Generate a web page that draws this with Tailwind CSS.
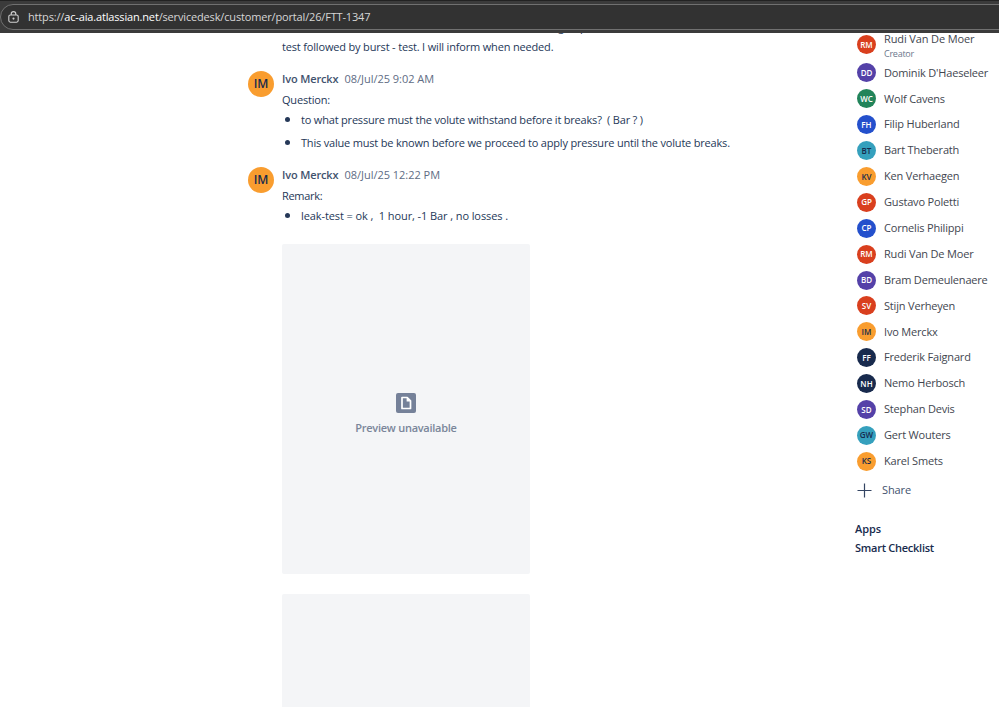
<!DOCTYPE html>
<html lang="en">
<head>
  <meta charset="UTF-8">
  <title>FTT-1347</title>
  <script src="https://cdn.jsdelivr.net/npm/@tailwindcss/browser@4"></script>
</head>
<body class="h-[707px] overflow-hidden bg-white font-['Open_Sans','Noto_Sans',sans-serif] text-[11px] text-[#253858]">

  <!-- Address bar -->
  <header class="h-[33px] border-t border-[#222222] bg-[#3b3b3b] pt-[3px]">
    <div class="-mr-4 flex h-[26px] items-center rounded-l-full border border-[#707070] bg-[#323232] pl-[7px] text-[#d6d6d6]">
      <svg class="h-3 w-[11px]" viewBox="0 0 11 12" fill="none" stroke="#d0d0d0" stroke-width="1.1">
        <rect x="0.8" y="4" width="9.4" height="7.2" rx="1.6"/>
        <path d="M3.2 4V2.9a2.3 2.3 0 0 1 4.6 0V4"/>
        <circle cx="5.5" cy="7.6" r="0.5" fill="#d0d0d0"/>
      </svg>
      <div class="ml-[9px] whitespace-nowrap text-[11px] tracking-[-0.16px]">https://<span class="text-white">ac-aia.atlassian.net</span>/servicedesk/customer/portal/26/FTT-1347</div>
    </div>
  </header>

  <div class="flex h-[674px] overflow-hidden">
    <!-- Comments -->
    <main class="w-[855px] shrink-0 pl-[248px]">
      <div class="h-[4px] overflow-hidden pl-[310px]">
        <div class="-mt-[16px] flex h-5 gap-[16px] leading-5"><span>g</span><span>p</span></div>
      </div>
      <p class="pl-[34px] leading-5 tracking-[-0.17px]">test followed by burst - test. I will inform when needed.</p>

      <article class="mt-[12px] flex gap-2">
        <div class="mt-[2px] flex size-[26px] shrink-0 items-center justify-center rounded-full bg-[#f99d2f] text-[12px] font-semibold text-[#172b4d]">IM</div>
        <div>
          <div class="flex h-[20px] items-center gap-[6px] text-[#42526e]"><span class="font-semibold tracking-[-0.14px]">Ivo Merckx</span><span class="tracking-[-0.02px] text-[#5e6c84]">08/Jul/25 9:02 AM</span></div>
          <p class="mt-[1px] h-5 leading-5 tracking-[-0.2px]">Question:</p>
          <ul class="list-disc pl-[19px] tracking-[-0.19px] marker:text-[13px]">
            <li class="h-[23px] leading-[18px] whitespace-pre">to what pressure must the volute withstand before it breaks?  ( Bar ? )</li>
            <li class="h-[19px] leading-[18px]">This value must be known before we proceed to apply pressure until the volute breaks.</li>
          </ul>
        </div>
      </article>

      <article class="mt-[13px] flex gap-2">
        <div class="mt-[2px] flex size-[26px] shrink-0 items-center justify-center rounded-full bg-[#f99d2f] text-[12px] font-semibold text-[#172b4d]">IM</div>
        <div>
          <div class="flex h-[20px] items-center gap-[6px] text-[#42526e]"><span class="font-semibold tracking-[-0.14px]">Ivo Merckx</span><span class="tracking-[-0.02px] text-[#5e6c84]">08/Jul/25 12:22 PM</span></div>
          <p class="mt-[1px] h-5 leading-5 tracking-[-0.3px]">Remark:</p>
          <ul class="list-disc pl-[19px] tracking-[-0.09px] marker:text-[13px]">
            <li class="h-[19px] leading-[18px] whitespace-pre">leak-test = ok ,  1 hour, -1 Bar , no losses .</li>
          </ul>
          <div class="mt-[19px] flex h-[330px] w-[248px] flex-col items-center rounded-[2px] bg-[#f4f5f7] pt-[149px] text-[#7a869a]">
            <svg class="h-5 w-5" viewBox="0 0 20 20">
              <rect width="20" height="20" rx="2" fill="#758199"/>
              <path d="M6 4.5h5.2l3.3 3.3v7.7H6z" fill="none" stroke="#ffffff" stroke-width="1.7" stroke-linejoin="round"/>
              <path d="M10.6 4v4.4H15z" fill="#ffffff"/>
            </svg>
            <span class="mt-[5px] leading-5 font-semibold tracking-[-0.26px]">Preview unavailable</span>
          </div>
          <div class="mt-5 h-[330px] w-[248px] rounded-[2px] bg-[#f4f5f7]"></div>
        </div>
      </article>
    </main>

    <!-- People on the request -->
    <aside class="whitespace-nowrap">
      <div class="flex h-[27px] gap-[8px] pl-[2px]">
        <div class="mt-[2px] flex size-[19px] items-center justify-center rounded-full bg-[#d93f1e] text-[8px] font-semibold text-white">RM</div>
        <div class="text-[#42464f]">
          <div class="-mt-px h-[14px] leading-[13px] tracking-[-0.12px]">Rudi Van De Moer</div>
          <div class="text-[9px] leading-[15px] tracking-[-0.25px] text-[#6b778c]">Creator</div>
        </div>
      </div>
      <ul id="people" class="text-[#42464f]"></ul>
      <div class="mt-[6px] flex h-[20px] items-center gap-[10px] pl-[2px] font-medium text-[#42526e]">
        <svg class="h-[15px] w-[15px]" viewBox="0 0 15 15" stroke="#344563" stroke-width="1.2"><path d="M7.5 0.5v14M0.5 7.5h14"/></svg>
        <span class="tracking-[-0.1px]">Share</span>
      </div>
      <div class="mt-[19px] h-[19px] leading-[19px] font-semibold tracking-[-0.1px] text-[#172b4d]">Apps</div>
      <div class="h-[19px] leading-[20px] font-semibold tracking-[-0.26px] text-[#172b4d]">Smart Checklist</div>
    </aside>
  </div>

  <script>
    const colors = {
      purple: 'bg-[#5441a8] text-white',
      green: 'bg-[#22845a] text-white',
      blue: 'bg-[#2450cc] text-white',
      teal: 'bg-[#35a0bd] text-[#172b4d]',
      orange: 'bg-[#f99d2f] text-[#172b4d]',
      red: 'bg-[#d93f1e] text-white',
      navy: 'bg-[#182a4d] text-white'
    };
    const people = [
      ['DD', "Dominik D'Haeseleer", 'purple'],
      ['WC', 'Wolf Cavens', 'green'],
      ['FH', 'Filip Huberland', 'blue'],
      ['BT', 'Bart Theberath', 'teal'],
      ['KV', 'Ken Verhaegen', 'orange'],
      ['GP', 'Gustavo Poletti', 'red'],
      ['CP', 'Cornelis Philippi', 'blue'],
      ['RM', 'Rudi Van De Moer', 'red'],
      ['BD', 'Bram Demeulenaere', 'purple'],
      ['SV', 'Stijn Verheyen', 'red'],
      ['IM', 'Ivo Merckx', 'orange'],
      ['FF', 'Frederik Faignard', 'navy'],
      ['NH', 'Nemo Herbosch', 'navy'],
      ['SD', 'Stephan Devis', 'purple'],
      ['GW', 'Gert Wouters', 'teal'],
      ['KS', 'Karel Smets', 'orange']
    ];

    document.getElementById('people').innerHTML = people.map(([initials, name, color]) => `
      <li class="flex h-[25.9px] items-center gap-[8px] pl-[2px]">
        <span class="flex size-[19px] items-center justify-center rounded-full text-[8px] font-semibold ${colors[color]}">${initials}</span>
        <span class="tracking-[-0.18px]">${name}</span>
      </li>
    `).join('');
  </script>
</body>
</html>
